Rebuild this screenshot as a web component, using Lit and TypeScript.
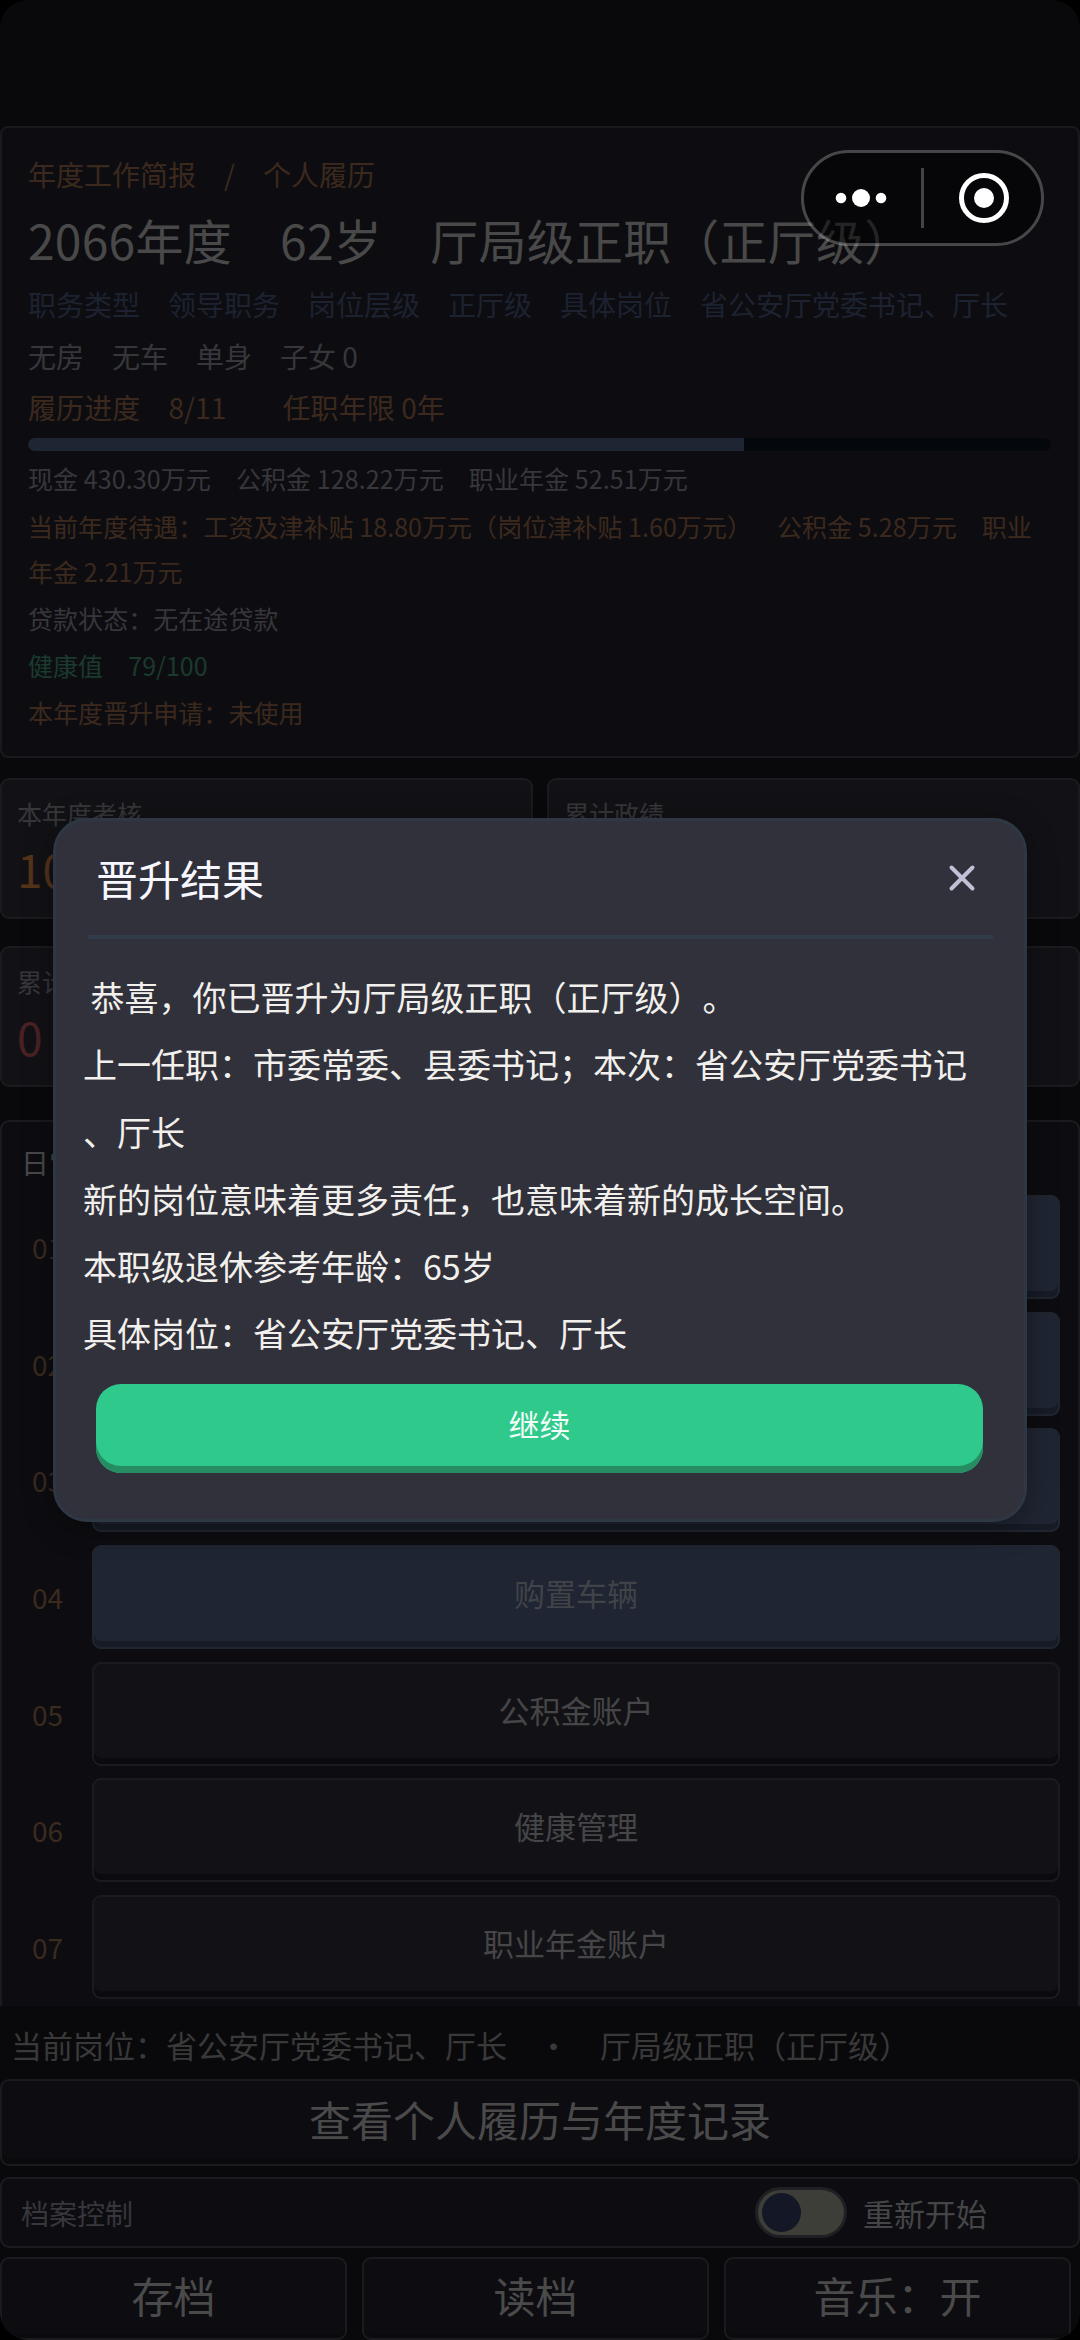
import { LitElement, html, css } from "lit";
import { customElement, property } from "lit/decorators.js";
import { classMap } from "lit/directives/class-map.js";

interface Line {
  text: string;
  tone: string;
}

const SUMMARY: Line[] = [
  { text: "当前年度待遇：工资及津补贴 18.80万元（岗位津补贴 1.60万元）　公积金 5.28万元　职业年金 2.21万元", tone: "amber" },
  { text: "贷款状态：无在途贷款", tone: "gray" },
  { text: "健康值　79/100", tone: "green" },
  { text: "本年度晋升申请：未使用", tone: "amber" },
];

const STATS = [
  { label: "本年度考核", value: "100", tone: "gold" },
  { label: "累计政绩", value: "", tone: "gold" },
  { label: "累计风险", value: "0", tone: "red" },
  { label: "", value: "", tone: "red" },
];

const ACTIONS = [
  { name: "", primary: true },
  { name: "", primary: true },
  { name: "", primary: true },
  { name: "购置车辆", primary: true },
  { name: "公积金账户", primary: false },
  { name: "健康管理", primary: false },
  { name: "职业年金账户", primary: false },
];

const MESSAGE = [
  " 恭喜，你已晋升为厅局级正职（正厅级）。",
  "上一任职：市委常委、县委书记；本次：省公安厅党委书记",
  "、厅长",
  "新的岗位意味着更多责任，也意味着新的成长空间。",
  "本职级退休参考年龄：65岁",
  "具体岗位：省公安厅党委书记、厅长",
];

@customElement("resume-card")
class ResumeCard extends LitElement {
  @property({ type: Number }) progress = 0;

  static styles = css`
    :host { display: block; box-sizing: border-box; height: 632px; padding: 26px 27px 0 26px; background: #0d0d11; border: 2px solid #1a1a1e; border-radius: 8px; }
    .line { height: 40px; line-height: 40px; font-size: 28px; white-space: pre; }
    .title { height: 70px; line-height: 70px; margin-top: 10px; font-size: 48px; letter-spacing: 0.22px; color: #494949; }
    .duty { margin-top: 10px; }
    .family { margin-top: 12px; }
    .step { margin-top: 11px; letter-spacing: 0.08px; }
    .track { height: 13px; margin-top: 11px; border-radius: 7px; background: #04070c; overflow: hidden; }
    .fill { height: 100%; background: #1f2633; }
    .money { margin-top: 7px; margin-bottom: 6px; font-size: 25px; letter-spacing: 0.08px; }
    .note { margin: 0 0 2px; line-height: 45px; font-size: 25px; letter-spacing: 0.05px; }
    .amber { color: #3c291d; }
    .gray { color: #37373b; }
    .blue { color: #1c2230; }
    .green { color: #1a3a2e; }
  `;

  render() {
    return html`
      <div class="line amber">年度工作简报　/　个人履历</div>
      <div class="line title">2066年度　62岁　厅局级正职（正厅级）</div>
      <div class="line duty blue">职务类型　领导职务　岗位层级　正厅级　具体岗位　省公安厅党委书记、厅长</div>
      <div class="line family gray">无房　无车　单身　子女 0</div>
      <div class="line step amber">履历进度　8/11　　任职年限 0年</div>
      <div class="track"><div class="fill" style="width:${this.progress}%"></div></div>
      <div class="line money gray">现金 430.30万元　公积金 128.22万元　职业年金 52.51万元</div>
      ${SUMMARY.map((l) => html`<p class="note ${l.tone}">${l.text}</p>`)}
    `;
  }
}

@customElement("result-dialog")
class ResultDialog extends LitElement {
  static styles = css`
    :host { display: block; box-sizing: border-box; height: 704px; padding: 30px 27px 0; background: #31313b; border: 3px solid #2d3844; border-radius: 34px; box-shadow: 0 6px 30px rgba(0, 0, 0, 0.35); }
    .head { display: flex; justify-content: space-between; align-items: center; height: 54px; padding: 0 19px 0 13px; }
    .title { font-size: 42px; line-height: 54px; color: #f7f7ff; }
    .close { width: 32px; height: 32px; }
    .rule { height: 4px; margin: 30px 4px 0 5px; background: #323b4a; }
    .line { height: 67.3px; line-height: 67.3px; font-size: 34px; color: #f2f0ec; white-space: pre; }
    .text { padding: 24px 0 0 0; margin-right: -20px; }
    .ok { display: flex; justify-content: center; box-sizing: border-box; width: 887px; height: 89px; margin: 17.6px 0 0 13px; border-radius: 25px; background: #30c98c; box-shadow: inset 0 -7px 0 #268d62; color: #effdf6; font-size: 31px; line-height: 79px; }
  `;

  render() {
    return html`
      <div class="head">
        <div class="title">晋升结果</div>
        <svg class="close" viewBox="0 0 32 32" fill="none" stroke="#c1c0d6" stroke-width="4" stroke-linecap="round">
          <path d="M5.5 5.5 L26.5 26.5 M26.5 5.5 L5.5 26.5" />
        </svg>
      </div>
      <div class="rule"></div>
      <div class="text">${MESSAGE.map((m) => html`<div class="line">${m}</div>`)}</div>
      <div class="ok">继续</div>
    `;
  }
}

@customElement("app-root")
class AppRoot extends LitElement {
  static styles = css`
    :host { display: block; position: relative; width: 1080px; height: 2340px; overflow: hidden; background: #000; font-family: "Noto Sans CJK SC", sans-serif; font-weight: 400; text-spacing-trim: space-all; }
    .screen { display: flex; flex-direction: column; box-sizing: border-box; height: 2340px; padding-top: 126px; background: #09090b; border-radius: 28px; overflow: hidden; }
    .box { box-sizing: border-box; border: 2px solid #1b1b1f; border-radius: 9px; background: #0d0d11; }
    .stats { display: grid; grid-template-columns: 533px 533px; column-gap: 14px; row-gap: 27px; margin-top: 20px; }
    .stat { height: 141px; padding: 13px 15px 0; background: #121216; }
    .label { height: 40px; line-height: 40px; font-size: 25px; color: #37373a; }
    .value { height: 60px; margin-top: 5px; line-height: 60px; font-size: 46px; }
    .gold { color: #543319; }
    .red { color: #4a2224; }
    .daily { height: 886px; margin-top: 33px; padding: 20px 18px 0 19px; border-bottom: 0; border-radius: 9px 9px 0 0; }
    .heading { height: 40px; line-height: 40px; font-size: 28px; color: #48484a; }
    .actions { display: flex; flex-direction: column; gap: 12.67px; margin-top: 13px; }
    .action { display: flex; align-items: center; height: 104px; }
    .no { width: 71px; padding-left: 11px; box-sizing: border-box; font-size: 28px; line-height: 40px; color: #3b2a1f; }
    .go { flex: 1; height: 104px; text-align: center; font-size: 31px; line-height: 92px; color: #464648; background: #121216; box-shadow: inset 0 -6px 0 #0b0b0f; }
    .primary { background: #1f2532; border-color: #20262f; box-shadow: inset 0 -6px 0 #171b26; color: #404348; }
    .post { height: 73px; padding: 0 11px; font-size: 31px; line-height: 78px; color: #39393a; white-space: pre; }
    .history { height: 87px; text-align: center; font-size: 42px; line-height: 75px; color: #4a4a4b; box-shadow: inset 0 -6px 0 #0a0a0d; }
    .control { display: flex; align-items: center; height: 71px; margin-top: 11px; padding-left: 19px; }
    .caption { flex: 1; font-size: 28px; line-height: 40px; color: #37373c; }
    .toggle { width: 92px; height: 51px; box-sizing: border-box; padding: 3px 4px; border: 3px solid #1f1f24; border-radius: 26px; background: #3c3e37; }
    .knob { width: 39px; height: 39px; border-radius: 50%; background: #131726; }
    .restart { width: 231px; padding-left: 16px; box-sizing: border-box; font-size: 31px; line-height: 44px; color: #454548; }
    .slots { display: grid; grid-template-columns: repeat(3, 347px); column-gap: 15px; margin-top: 9px; }
    .slot { height: 83px; text-align: center; font-size: 42px; line-height: 71px; color: #4a4a4b; box-shadow: inset 0 -4px 0 #0b0b0e; }
    .dialog { position: absolute; left: 53px; top: 818px; width: 974px; }
    .capsule { position: absolute; left: 801px; top: 150px; width: 243px; height: 96px; }
  `;

  render() {
    return html`
      <div class="screen">
        <resume-card .progress=${70}></resume-card>
        <div class="stats">
          ${STATS.map(
            (s) => html`<div class="box stat">
              <div class="label">${s.label}</div>
              <div class="value ${s.tone}">${s.value}</div>
            </div>`
          )}
        </div>
        <div class="box daily">
          <div class="heading">日常事务</div>
          <div class="actions">
            ${ACTIONS.map(
              (a, i) => html`<div class="action">
                <div class="no">0${i + 1}</div>
                <div class=${classMap({ box: true, go: true, primary: a.primary })}>${a.name}</div>
              </div>`
            )}
          </div>
        </div>
        <div class="post">当前岗位：省公安厅党委书记、厅长　・　厅局级正职（正厅级）</div>
        <div class="box history">查看个人履历与年度记录</div>
        <div class="box control">
          <div class="caption">档案控制</div>
          <div class="toggle"><div class="knob"></div></div>
          <div class="restart">重新开始</div>
        </div>
        <div class="slots">
          ${["存档", "读档", "音乐：开"].map((t) => html`<div class="box slot">${t}</div>`)}
        </div>
      </div>
      <result-dialog class="dialog"></result-dialog>
      <svg class="capsule" viewBox="0 0 243 96">
        <rect x="1.5" y="1.5" width="240" height="93" rx="46.5" fill="#000" fill-opacity="0.5" stroke="#fff" stroke-opacity="0.25" stroke-width="3" />
        <g fill="#fff">
          <circle cx="40" cy="48" r="5.3" />
          <circle cx="60" cy="48" r="9" />
          <circle cx="80" cy="48" r="5.3" />
          <circle cx="183" cy="48" r="10" />
        </g>
        <rect x="120" y="18" width="3" height="60" fill="#fff" fill-opacity="0.25" />
        <circle cx="183" cy="48" r="22.5" fill="none" stroke="#fff" stroke-width="5" />
      </svg>
    `;
  }
}
